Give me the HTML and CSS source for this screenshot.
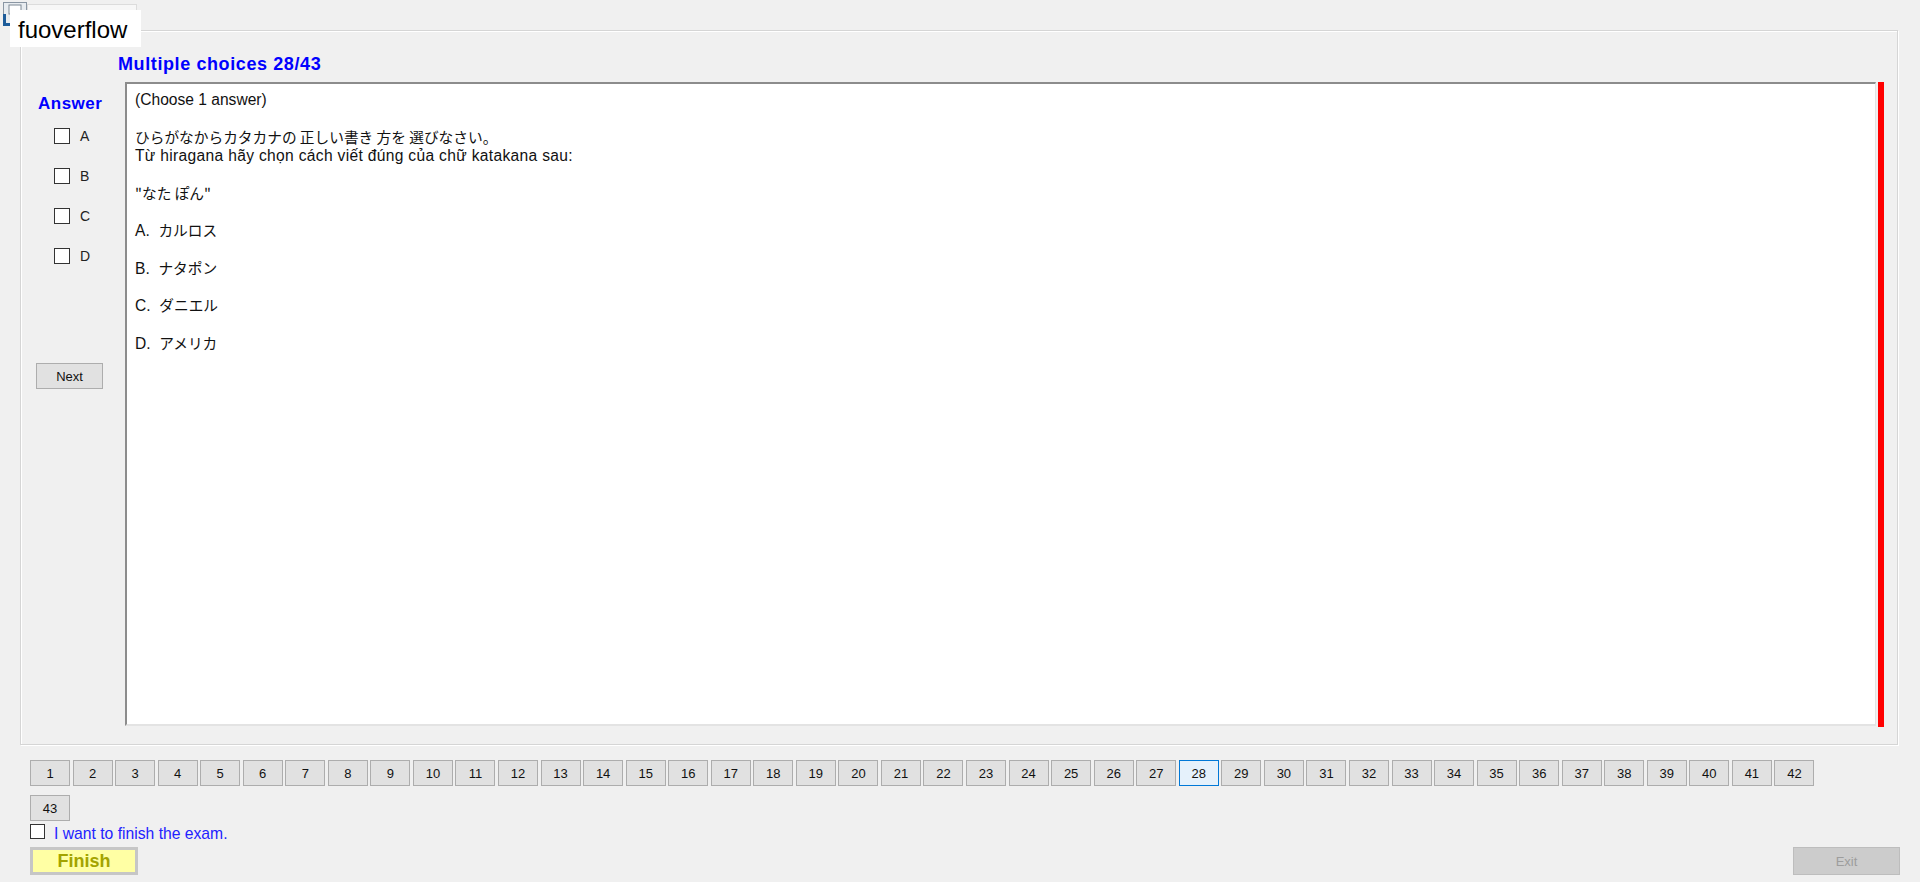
FILE: index.html
```html
<!DOCTYPE html>
<html lang="vi">
<head>
<meta charset="UTF-8">
<title>Exam</title>
<link rel="stylesheet" href="styles.css">
</head>
<body>
<!-- window icon + watermark label sit over the form -->
<div class="app-icon">
    <svg width="24" height="24" viewBox="0 0 24 24">
        <rect x="0.5" y="0.5" width="23" height="23" fill="#e8ecf0" stroke="#8a96a3"/>
        <rect x="6" y="3" width="12" height="9" fill="#fff" stroke="#7d8894"/>
        <path d="M1 12 V23 H12" fill="none" stroke="#1d5c9a" stroke-width="4"/>
    </svg>
</div>
<div class="caption-box"></div>
<div class="watermark">fuoverflow</div>

<div class="group">
    <div class="title">Multiple choices 28/43</div>
    <div class="exam-row">
        <div class="answer-col">
            <div class="answer-head">Answer</div>
            <div class="choices">
                <label class="choice"><span class="box"></span>A</label>
                <label class="choice"><span class="box"></span>B</label>
                <label class="choice"><span class="box"></span>C</label>
                <label class="choice"><span class="box"></span>D</label>
            </div>
            <button class="win-btn next-btn">Next</button>
        </div>
        <div class="question">
            <p>(Choose 1 answer)</p>
            <p><span class="jp">ひらがなからカタカナの 正しい書き 方を 選びなさい。</span><br><span class="vn">Từ hiragana hãy chọn cách viết đúng của chữ katakana sau:</span></p>
            <p><span class="jp">"なた ぽん"</span></p>
            <p>A.&nbsp; <span class="jp">カルロス</span></p>
            <p>B.&nbsp; <span class="jp">ナタポン</span></p>
            <p>C.&nbsp; <span class="jp">ダニエル</span></p>
            <p>D.&nbsp; <span class="jp">アメリカ</span></p>
        </div>
        <div class="red-bar"></div>
    </div>
</div>

<div class="nav">
    <button class="num">1</button><button class="num">2</button><button class="num">3</button><button class="num">4</button><button class="num">5</button><button class="num">6</button><button class="num">7</button><button class="num">8</button><button class="num">9</button><button class="num">10</button>
    <button class="num">11</button><button class="num">12</button><button class="num">13</button><button class="num">14</button><button class="num">15</button><button class="num">16</button><button class="num">17</button><button class="num">18</button><button class="num">19</button><button class="num">20</button>
    <button class="num">21</button><button class="num">22</button><button class="num">23</button><button class="num">24</button><button class="num">25</button><button class="num">26</button><button class="num">27</button><button class="num current">28</button><button class="num">29</button><button class="num">30</button>
    <button class="num">31</button><button class="num">32</button><button class="num">33</button><button class="num">34</button><button class="num">35</button><button class="num">36</button><button class="num">37</button><button class="num">38</button><button class="num">39</button><button class="num">40</button>
    <button class="num">41</button><button class="num">42</button><button class="num">43</button>
</div>

<label class="finish-check"><span class="box small"></span><span class="finish-text">I want to finish the exam.</span></label>

<div class="bottom-bar">
    <button class="finish-btn">Finish</button>
    <button class="exit-btn">Exit</button>
</div>
</body>
</html>
```

FILE: styles.css
```css
body {
    margin: 0;
    background: #f0f0f0;
    font-family: 'Liberation Sans', Arial, sans-serif;
    color: #111;
    overflow: hidden;
    position: relative;
}
.app-icon {
    position: absolute;
    left: 3px;
    top: 2px;
    width: 24px;
    height: 24px;
}
.caption-box {
    position: absolute;
    left: 27px;
    top: 4px;
    width: 108px;
    height: 12px;
    border: 1px solid #dcdcdc;
    border-bottom: none;
    background: #f7f7f7;
}
.watermark {
    position: absolute;
    left: 10px;
    top: 10px;
    height: 37px;
    padding: 3px 14px 0 8px;
    box-sizing: border-box;
    background: #fff;
    font-size: 24px;
    line-height: 34px;
    color: #000;
}
.group {
    margin: 30px 0 0 20px;
    width: 1878px;
    height: 715px;
    box-sizing: border-box;
    border: 1px solid #d5d5d5;
    box-shadow: inset 1px 1px 0 #fff, 1px 1px 0 #fff;
    padding-top: 22px;
}
.title {
    padding-left: 97px;
    font-size: 18px;
    line-height: 22px;
    font-weight: bold;
    letter-spacing: 0.6px;
    color: #0000ff;
}
.exam-row {
    display: flex;
    margin-top: 7px;
}
.answer-col {
    width: 104px;
    flex-shrink: 0;
}
.answer-head {
    margin-top: 12px;
    padding-left: 17px;
    font-size: 17px;
    line-height: 20px;
    font-weight: bold;
    letter-spacing: 0.5px;
    color: #0000ff;
}
.choices {
    display: flex;
    flex-direction: column;
    gap: 24px;
    margin-top: 14px;
    padding-left: 33px;
}
.choice {
    display: flex;
    align-items: center;
    height: 16px;
    font-size: 14px;
    color: #222;
}
.box {
    display: inline-block;
    width: 16px;
    height: 16px;
    box-sizing: border-box;
    border: 1px solid #333;
    background: #fff;
    margin-right: 10px;
}
.box.small {
    width: 15px;
    height: 15px;
    margin-right: 9px;
}
.win-btn {
    font-family: inherit;
    background: #e1e1e1;
    border: 1px solid #adadad;
    color: #111;
    padding: 0;
}
.next-btn {
    display: block;
    margin: 99px 0 0 15px;
    width: 67px;
    height: 26px;
    font-size: 13px;
}
.question {
    width: 1751px;
    height: 644px;
    box-sizing: border-box;
    background: #fff;
    border-top: 2px solid #8c8c8c;
    border-left: 2px solid #8c8c8c;
    border-right: 1px solid #e3e3e3;
    border-bottom: 2px solid #e3e3e3;
    padding: 7px 0 0 8px;
    font-size: 15.6px;
    line-height: 18.75px;
    color: #111;
}
.question p {
    margin: 0 0 18.75px;
}
.jp {
    font-family: 'Noto Sans CJK JP', sans-serif;
    font-size: 14.7px;
    line-height: 14px;
}
.vn {
    letter-spacing: 0.32px;
}
.red-bar {
    width: 6px;
    height: 645px;
    margin-left: 2px;
    background: #ff0000;
}
.nav {
    display: flex;
    flex-wrap: wrap;
    row-gap: 9px;
    width: 1800px;
    margin: 15px 0 0 30px;
}
.num {
    width: 40px;
    height: 26px;
    margin-right: 2.56px;
    padding: 0;
    box-sizing: border-box;
    background: #e1e1e1;
    border: 1px solid #adadad;
    font-family: inherit;
    font-size: 13px;
    color: #111;
}
.num.current {
    background: #e5f1fb;
    border-color: #0078d7;
}
.finish-check {
    display: flex;
    align-items: flex-start;
    margin: 3px 0 0 30px;
    height: 19px;
}
.finish-text {
    padding-top: 1px;
    font-size: 15.7px;
    line-height: 18px;
    color: #2222ff;
}
.bottom-bar {
    display: flex;
    justify-content: space-between;
    margin-top: 4px;
    padding: 0 20px 0 30px;
}
.finish-btn {
    width: 108px;
    height: 28px;
    box-sizing: border-box;
    border: 3px solid #c6c6c6;
    background: #ffffa4;
    color: #a3a300;
    font-family: inherit;
    font-size: 18px;
    font-weight: bold;
    padding: 0;
}
.exit-btn {
    width: 107px;
    height: 28px;
    box-sizing: border-box;
    border: 1px solid #bdbdbd;
    background: #cccccc;
    color: #9d9d9d;
    font-family: inherit;
    font-size: 13px;
    padding: 0;
}
```
